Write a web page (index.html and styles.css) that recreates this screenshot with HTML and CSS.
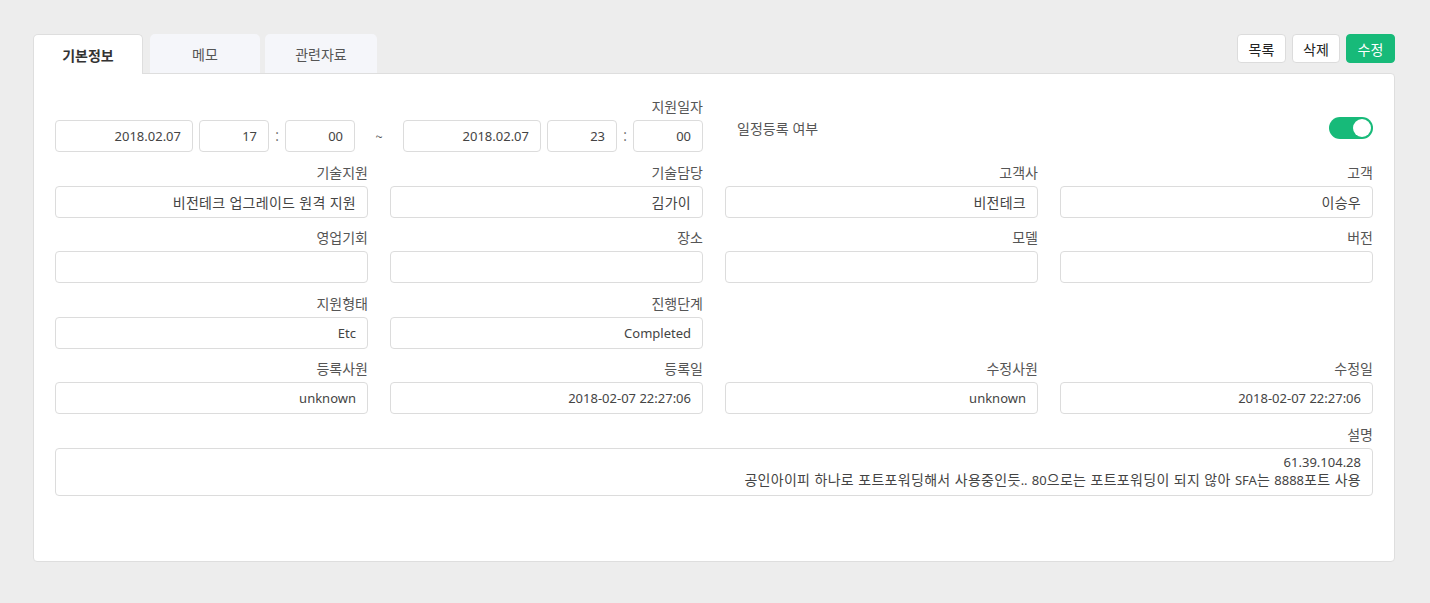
FILE: index.html
```html
<!DOCTYPE html>
<html lang="ko">
<head>
<meta charset="utf-8">
<title>기본정보</title>
<link rel="stylesheet" href="styles.css">
</head>
<body>
<div class="page">
  <div class="topbar">
    <div class="tabs">
      <div class="tab active">기본정보</div>
      <div class="tab tab-memo">메모</div>
      <div class="tab tab-files">관련자료</div>
    </div>
    <div class="actions">
      <button class="btn">목록</button>
      <button class="btn">삭제</button>
      <button class="btn btn-primary">수정</button>
    </div>
  </div>
  <div class="card">
    <div class="grid">
      <div class="field span2">
        <div class="label">지원일자</div>
        <div class="daterow">
          <div class="input date">2018.02.07</div>
          <div class="input time">17</div>
          <span class="sep colon">:</span>
          <div class="input time">00</div>
          <span class="sep tilde">~</span>
          <div class="input date">2018.02.07</div>
          <div class="input time">23</div>
          <span class="sep colon">:</span>
          <div class="input time">00</div>
        </div>
      </div>
      <div class="field span2 schedule">
        <span class="schedule-label">일정등록 여부</span>
        <span class="toggle"><span class="knob"></span></span>
      </div>

      <div class="field"><div class="label">기술지원</div><div class="input ko">비전테크 업그레이드 원격 지원</div></div>
      <div class="field"><div class="label">기술담당</div><div class="input ko">김가이</div></div>
      <div class="field"><div class="label">고객사</div><div class="input ko">비전테크</div></div>
      <div class="field"><div class="label">고객</div><div class="input ko">이승우</div></div>

      <div class="field"><div class="label">영업기회</div><div class="input"></div></div>
      <div class="field"><div class="label">장소</div><div class="input"></div></div>
      <div class="field"><div class="label">모델</div><div class="input"></div></div>
      <div class="field"><div class="label">버전</div><div class="input"></div></div>

      <div class="field"><div class="label">지원형태</div><div class="input">Etc</div></div>
      <div class="field"><div class="label">진행단계</div><div class="input">Completed</div></div>
      <div class="field empty"></div>
      <div class="field empty"></div>

      <div class="field"><div class="label">등록사원</div><div class="input">unknown</div></div>
      <div class="field"><div class="label">등록일</div><div class="input">2018-02-07 22:27:06</div></div>
      <div class="field"><div class="label">수정사원</div><div class="input">unknown</div></div>
      <div class="field"><div class="label">수정일</div><div class="input">2018-02-07 22:27:06</div></div>

      <div class="field span4">
        <div class="label">설명</div>
        <div class="input textarea"><span class="lat">61.39.104.28</span><br>공인아이피 하나로 포트포워딩해서 사용중인듯<span class="lat">..</span> <span class="lat">80</span>으로는 포트포워딩이 되지 않아 <span class="lat">SFA</span>는 <span class="lat">8888</span>포트 사용</div>
      </div>
    </div>
  </div>
</div>
</body>
</html>
```

FILE: styles.css
```css
* { box-sizing: border-box; }
html, body { margin: 0; padding: 0; }
body {
  background: #ededed;
  font-family: "Noto Sans CJK KR", "Noto Sans", "Liberation Sans", sans-serif;
  font-size: 14px;
  color: #444;
}
.page {
  padding: 34px 35px 41px 33px;
}
.topbar {
  display: flex;
  justify-content: space-between;
  align-items: flex-start;
  height: 39px;
}
.tabs {
  display: flex;
  align-items: flex-end;
  height: 39px;
}
.tab {
  width: 110px;
  height: 39px;
  display: flex;
  align-items: center;
  justify-content: center;
  background: #f5f6fa;
  border-radius: 5px 5px 0 0;
  color: #555;
  font-size: 14px;
  position: relative;
}
.tab.active {
  background: #fff;
  border: 1px solid #dedede;
  border-bottom: none;
  color: #333;
  font-weight: bold;
  z-index: 2;
  height: 40px;
  margin-bottom: -1px;
}
.tab-memo { margin-left: 7px; }
.tab-files { margin-left: 5px; width: 112px; }
.actions {
  display: flex;
  gap: 6px;
}
.btn {
  height: 29px;
  width: 49px;
  border: 1px solid #dcdcdc;
  background: #fff;
  border-radius: 4px;
  font-family: inherit;
  font-size: 14px;
  color: #222;
  padding: 0;
}
.btn:nth-child(2) { width: 48px; }
.btn-primary {
  background: #17ba79;
  border-color: #17ba79;
  color: #fff;
}
.card {
  background: #fff;
  border: 1px solid #dedede;
  border-radius: 0 4px 4px 4px;
  padding: 22px 21px 65px 21px;
  position: relative;
  z-index: 1;
}
.grid {
  display: grid;
  grid-template-columns: repeat(4, 313px);
  column-gap: 22px;
  row-gap: 9.6px;
}
.field {
  display: flex;
  flex-direction: column;
}
.span2 { grid-column: span 2; }
.span4 { grid-column: span 4; }
.label {
  height: 20px;
  line-height: 20px;
  margin-bottom: 4px;
  text-align: right;
  color: #555;
}
.input {
  height: 32px;
  border: 1px solid #dcdcdc;
  border-radius: 4px;
  padding: 0 11px;
  text-align: right;
  line-height: 30px;
  color: #444;
  font-family: "Noto Sans", "Noto Sans CJK KR", sans-serif;
  font-size: 13px;
  white-space: nowrap;
  overflow: hidden;
}
.input.ko {
  font-family: "Noto Sans CJK KR", sans-serif;
  font-size: 14px;
  letter-spacing: 0.25px;
}
.lat { font-family: "Noto Sans", sans-serif; font-size: 13px; letter-spacing: 0; }
.daterow {
  display: flex;
  align-items: center;
}
.daterow .input.date { width: 138px; }
.daterow .input.time { width: 70px; }
.daterow .input.date + .input.time { margin-left: 6px; }
.sep {
  display: flex;
  justify-content: center;
  color: #555;
  font-size: 13px;
}
.sep.colon { width: 16px; }
.sep.tilde { width: 48px; }
.schedule {
  flex-direction: row;
  align-items: center;
  justify-content: space-between;
  padding-top: 21px;
  height: 56px;
  align-self: start;
  padding-left: 12px;
}
.schedule-label {
  color: #555;
  line-height: 20px;
  align-self: flex-start;
  margin-top: 1px;
}
.toggle {
  width: 44px;
  height: 22px;
  border-radius: 11px;
  background: #17ba79;
  position: relative;
  align-self: flex-start;
}
.knob {
  position: absolute;
  right: 2px;
  top: 2px;
  width: 18px;
  height: 18px;
  border-radius: 50%;
  background: #fff;
}
.textarea {
  height: 48px;
  line-height: 17.5px;
  padding-top: 4px;
  font-family: "Noto Sans CJK KR", sans-serif;
  font-size: 14px;
  letter-spacing: 0.3px;
  white-space: normal;
}
```
